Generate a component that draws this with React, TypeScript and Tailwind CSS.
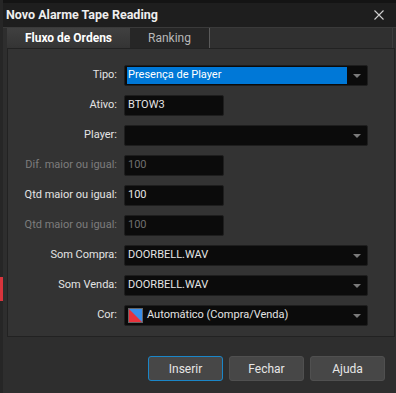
import React from 'react'

type Row = {
  label: string
  value?: string
  kind: 'select' | 'text'
  disabled?: boolean
  highlight?: boolean
  swatch?: boolean
}

const rows: Row[] = [
  { label: 'Tipo:', value: 'Presença de Player', kind: 'select', highlight: true },
  { label: 'Ativo:', value: 'BTOW3', kind: 'text' },
  { label: 'Player:', value: '', kind: 'select' },
  { label: 'Dif. maior ou igual:', value: '100', kind: 'text', disabled: true },
  { label: 'Qtd maior ou igual:', value: '100', kind: 'text' },
  { label: 'Qtd maior ou igual:', value: '100', kind: 'text', disabled: true },
  { label: 'Som Compra:', value: 'DOORBELL.WAV', kind: 'select' },
  { label: 'Som Venda:', value: 'DOORBELL.WAV', kind: 'select' },
  { label: 'Cor:', value: 'Automático (Compra/Venda)', kind: 'select', swatch: true },
]

function Arrow(): React.ReactElement {
  return (
    <svg width="8" height="4" viewBox="0 0 8 4" className="shrink-0">
      <path d="M0 0h8L4 4z" fill="#7a7a7a" />
    </svg>
  )
}

function Swatch(): React.ReactElement {
  return (
    <svg width="15" height="15" viewBox="0 0 15 15" className="mr-[4px] shrink-0">
      <rect x="0.5" y="0.5" width="14" height="14" fill="#3a8ee8" stroke="#666" />
      <path d="M1 1L14 14H1z" fill="#e8323c" />
    </svg>
  )
}

function Field({ row }: { row: Row }): React.ReactElement {
  const textColor = row.disabled ? 'text-[#6f6f6f]' : 'text-[#e4e4e4]'
  if (row.kind === 'text') {
    return (
      <div
        className={`flex h-[21px] w-[100px] items-center rounded-[2px] border border-[#1e1e1e] bg-[#0b0b0b] pl-[3px] ${textColor}`}
      >
        {row.value}
      </div>
    )
  }
  return (
    <div className="flex h-[21px] w-[244px] items-center rounded-[2px] border border-[#1e1e1e] bg-[#0b0b0b] pl-[2px] pr-[6px]">
      <div
        className={`flex h-[17px] flex-1 items-center whitespace-nowrap pl-[1px] ${
          row.highlight ? 'bg-[#0078d7] text-white' : textColor
        }`}
      >
        {row.swatch && <Swatch />}
        {row.value}
      </div>
      <div className="flex w-[14px] justify-end">
        <Arrow />
      </div>
    </div>
  )
}

function Button({ label, focused }: { label: string; focused?: boolean }): React.ReactElement {
  return (
    <button
      className={`flex h-[25px] w-[75px] items-center justify-center rounded-[3px] bg-[#474747] text-[12px] text-[#e6e6e6] ${
        focused ? 'border border-[#1b86c8]' : 'border border-[#505050]'
      }`}
    >
      {label}
    </button>
  )
}

export default function App(): React.ReactElement {
  return (
    <div
      className="flex h-[393px] w-[396px] overflow-hidden bg-[#141414] text-[11px]"
      style={{ fontFamily: 'Roboto, "Liberation Sans", sans-serif' }}
    >
      {/* fundo da aplicação à esquerda */}
      <div className="flex w-[3px] shrink-0 flex-col bg-[#262626] pt-[277px]">
        <div className="h-[24px] bg-[#d8343c]" />
      </div>

      <div className="mt-[3px] flex h-[390px] w-[393px] flex-col bg-[#2e2e2e]">
        {/* barra de título */}
        <div className="flex h-[25px] shrink-0 items-center justify-between border-b border-[#3a3a3a] bg-[#1e1e1e] pl-[3px] pr-[12px]">
          <span className="whitespace-nowrap text-[12.5px] font-bold text-[#eeeeee]">Novo Alarme Tape Reading</span>
          <svg width="10" height="10" viewBox="0 0 10 10">
            <path d="M0.5 0.5L9.5 9.5M9.5 0.5L0.5 9.5" stroke="#d0d0d0" strokeWidth="1.1" />
          </svg>
        </div>

        {/* abas */}
        <div className="ml-[4px] mr-[3px] flex h-[20px] shrink-0 border-r border-[#3c3c3c]">
          <div className="flex w-[123px] items-center justify-center bg-gradient-to-b from-[#404040] to-[#343434] text-[12px] font-bold text-white">
            Fluxo de Ordens
          </div>
          <div className="flex w-[80px] items-center justify-center border-r border-[#5a5a5a] bg-[#262626] text-[12px] text-[#b8b8b8]">
            Ranking
          </div>
          <div className="flex-1 bg-[#303030]" />
        </div>

        {/* painel */}
        <div className="ml-[4px] mr-[1px] flex shrink-0 flex-col gap-[9px] border border-[#222222] bg-[#333333] pb-[10px] pt-[16px]">
          {rows.map((row, i) => (
            <div key={i} className="flex items-center">
              <div
                className={`w-[110px] whitespace-nowrap pr-[1px] text-right ${
                  row.disabled ? 'text-[#7d7d7d]' : 'text-[#e4e4e4]'
                }`}
              >
                {row.label}
              </div>
              <div className="ml-[6px]">
                <Field row={row} />
              </div>
            </div>
          ))}
        </div>

        {/* botões */}
        <div className="mr-[11px] mt-[19px] flex justify-end gap-[6px]">
          <Button label="Inserir" focused />
          <Button label="Fechar" />
          <Button label="Ajuda" />
        </div>
      </div>
    </div>
  )
}
